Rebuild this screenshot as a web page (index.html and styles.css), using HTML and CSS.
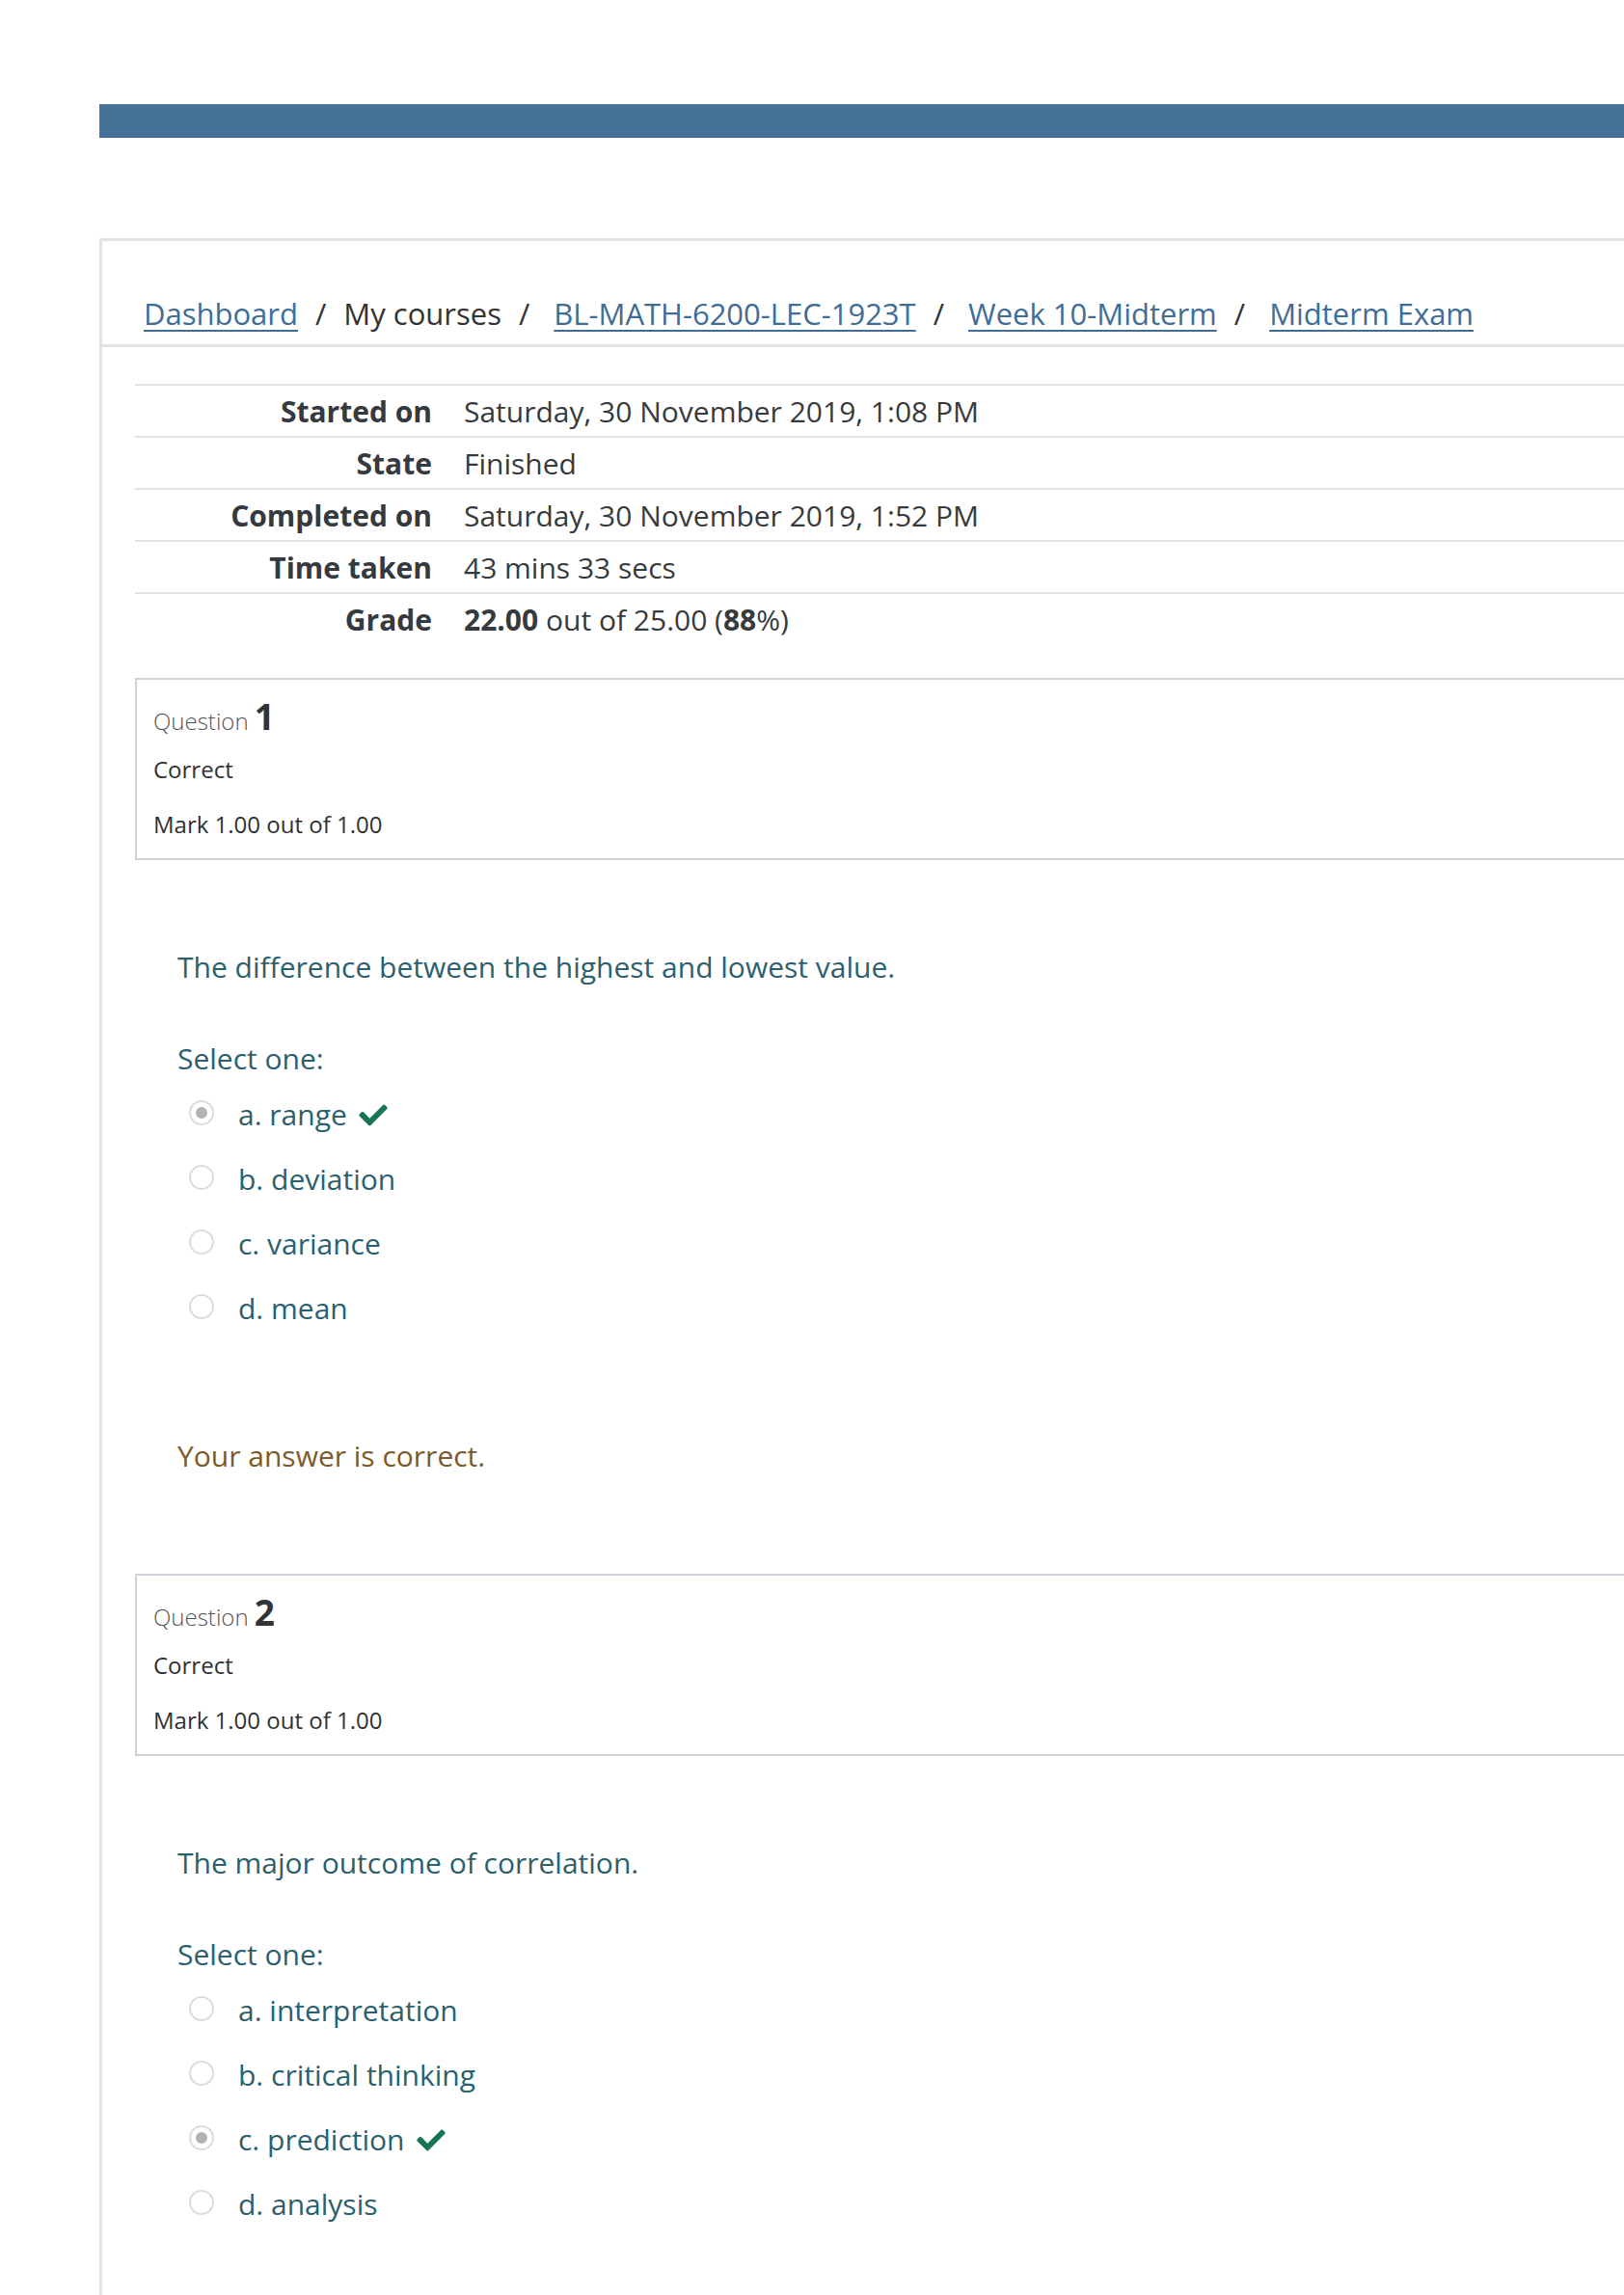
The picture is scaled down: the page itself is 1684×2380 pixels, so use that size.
FILE: index.html
```html
<!DOCTYPE html>
<html>
<head>
    <meta charset="utf-8">
    <title>Midterm Exam: Review of attempt</title>
    <link rel="stylesheet" href="styles.css">
</head>
<body>
    <div class="topbar"></div>

    <div class="page">
        <nav class="crumbs">
            <a href="#">Dashboard</a>
            <span class="sep">/</span>
            <span class="plain">My courses</span>
            <span class="sep">/</span>
            <a href="#">BL-MATH-6200-LEC-1923T</a>
            <span class="sep">/</span>
            <a href="#">Week 10-Midterm</a>
            <span class="sep">/</span>
            <a href="#">Midterm Exam</a>
        </nav>

        <div class="main">
            <table class="summary">
                <tr><th>Started on</th><td>Saturday, 30 November 2019, 1:08 PM</td></tr>
                <tr><th>State</th><td>Finished</td></tr>
                <tr><th>Completed on</th><td>Saturday, 30 November 2019, 1:52 PM</td></tr>
                <tr><th>Time taken</th><td>43 mins 33 secs</td></tr>
                <tr><th>Grade</th><td><b>22.00</b> out of 25.00 (<b>88</b>%)</td></tr>
            </table>

            <!-- question 1 -->
            <div class="que">
                <div class="info">
                    <h3 class="no">Question <span class="qno">1</span></h3>
                    <div class="state">Correct</div>
                    <div class="grade">Mark 1.00 out of 1.00</div>
                </div>
                <div class="content">
                    <div class="qtext">The difference between the highest and lowest value.</div>
                    <div class="prompt">Select one:</div>
                    <div class="answer">
                        <div class="opt"><span class="radio checked"></span><span class="lbl">a. range<svg class="tick" viewBox="0 0 512 400"><path d="M173.9 383.4l-166.4-166.4c-10-10-10-26.2 0-36.2l36.2-36.2c10-10 26.2-10 36.2 0L192 256.7 432.1 16.6c10-10 26.2-10 36.2 0l36.2 36.2c10 10 10 26.2 0 36.2l-294.4 294.4c-10 10-26.2 10-36.2 0z"/></svg></span></div>
                        <div class="opt"><span class="radio"></span><span class="lbl">b. deviation</span></div>
                        <div class="opt"><span class="radio"></span><span class="lbl">c. variance</span></div>
                        <div class="opt"><span class="radio"></span><span class="lbl">d. mean</span></div>
                    </div>
                    <div class="outcome">Your answer is correct.</div>
                </div>
            </div>

            <!-- question 2 -->
            <div class="que">
                <div class="info">
                    <h3 class="no">Question <span class="qno">2</span></h3>
                    <div class="state">Correct</div>
                    <div class="grade">Mark 1.00 out of 1.00</div>
                </div>
                <div class="content">
                    <div class="qtext">The major outcome of correlation.</div>
                    <div class="prompt">Select one:</div>
                    <div class="answer">
                        <div class="opt"><span class="radio"></span><span class="lbl">a. interpretation</span></div>
                        <div class="opt"><span class="radio"></span><span class="lbl">b. critical thinking</span></div>
                        <div class="opt"><span class="radio checked"></span><span class="lbl">c. prediction<svg class="tick" viewBox="0 0 512 400"><path d="M173.9 383.4l-166.4-166.4c-10-10-10-26.2 0-36.2l36.2-36.2c10-10 26.2-10 36.2 0L192 256.7 432.1 16.6c10-10 26.2-10 36.2 0l36.2 36.2c10 10 10 26.2 0 36.2l-294.4 294.4c-10 10-26.2 10-36.2 0z"/></svg></span></div>
                        <div class="opt"><span class="radio"></span><span class="lbl">d. analysis</span></div>
                    </div>
                </div>
            </div>
        </div>
    </div>
</body>
</html>
```

FILE: styles.css
```css
* {box-sizing: border-box;}
body {
    margin: 0;
    background: #fff;
    color: #373a3c;
    font-family: "Open Sans", "Noto Sans", sans-serif;
    font-size: 30px;
    line-height: 42px;
    overflow-x: hidden;}

.topbar {
    margin: 108px 0 0 103px;
    height: 35px;
    background-color: #46729a;}

.page {
    margin: 104px 0 0 103px;
    border-top: 3px solid #dfe2e6;
    border-left: 3px solid #dfe2e6;
    min-height: 2200px;}

/* breadcrumb */
.crumbs {
    display: flex;
    align-items: baseline;
    padding: 53px 0 9px 43px;
    font-size: 31px;
    line-height: 45px;
    border-bottom: 3px solid #dfe2e6;}
.crumbs a {
    color: #3f6d96;
    text-decoration: underline;
    text-decoration-thickness: 2px;
    text-underline-offset: 5px;}
.crumbs .sep {margin: 0 18px 0 18px; color: #333;}
.crumbs .sep + a {margin-left: 7px;}
.crumbs .plain {color: #333;}

.main {padding: 38px 0 0 34px;}

/* attempt summary */
.summary {
    width: 100%;
    border-collapse: collapse;
    margin-bottom: 35px;}
.summary tr {border-top: 2px solid #dfe2e6;}
.summary th, .summary td {
    padding: 6px 0 4px;
    line-height: 42px;
    text-align: left;
    vertical-align: top;}
.summary th {
    width: 324px;
    padding-right: 16px;
    text-align: right;
    font-weight: bold;
    color: #343a40;}
.summary td {padding-left: 17px;}

/* question block */
.que {margin-bottom: 101px;}
.info {
    border: 2px solid #cdd3da;
    border-right: 0;
    padding: 19px 0 15px 17px;
    height: 189px;
    color: #2f3133;}
.info .no {
    margin: 0;
    font-size: 24px;
    line-height: 44px;
    font-weight: 300;
    color: #555;}
.info .qno {
    font-size: 37px;
    line-height: 1;
    font-weight: bold;
    color: #333;}
.info .state {font-size: 24px; line-height: 36px; margin-top: 10px;}
.info .grade {font-size: 24px; line-height: 36px; margin-top: 21px;}

.content {
    padding-left: 44px;
    color: #2b606e;}
.qtext {margin-top: 90px;}
.prompt {margin-top: 53px;}
.answer {margin-top: 16px;}
.opt {
    display: flex;
    align-items: flex-start;
    padding-left: 12px;
    margin-bottom: 25px;}
.opt:last-child {margin-bottom: 0;}
.radio {
    flex: none;
    width: 26px;
    height: 26px;
    margin: 6px 25px 0 0;
    border: 2px solid #dcdcdc;
    border-radius: 50%;
    background: #fff;
    display: flex;
    align-items: center;
    justify-content: center;}
.radio.checked::after {
    content: "";
    width: 12px;
    height: 12px;
    border-radius: 50%;
    background: #b3b3b3;}
.tick {
    width: 30px;
    height: 23px;
    margin-left: 12px;
    fill: #167458;
    vertical-align: -1px;}

.outcome {
    margin-top: 111px;
    color: #7d5a29;}
```
